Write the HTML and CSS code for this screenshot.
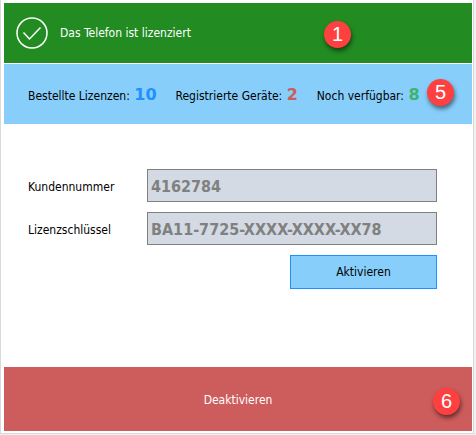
FILE: index.html
```
<!DOCTYPE html>
<html lang="de">
<head>
    <meta charset="UTF-8">
    <title>Lizenz</title>
    <link rel="stylesheet" href="styles.css">
</head>
<body>
<div class="panel">
    <header class="status">
        <svg class="status-icon" viewBox="0 0 32 32">
            <circle cx="16" cy="16" r="15"/>
            <path d="M7.500 15.500L13.500 22L24.500 10.500"/>
        </svg>
        <span>Das Telefon ist lizenziert</span>
        <span class="badge badge-status">1</span>
    </header>
    <div class="counts">
        <span>Bestellte Lizenzen: <b class="ordered">10</b></span>
        <span>Registrierte Geräte: <b class="registered">2</b></span>
        <span>Noch verfügbar: <b class="available">8</b></span>
        <span class="badge badge-counts">5</span>
    </div>
    <form class="license">
        <div class="field">
            <label for="customer">Kundennummer</label>
            <input id="customer" type="text" value="4162784" disabled>
        </div>
        <div class="field">
            <label for="key">Lizenzschlüssel</label>
            <input id="key" type="text" value="BA11-7725-XXXX-XXXX-XX78" disabled>
        </div>
        <button class="activate" type="button">Aktivieren</button>
    </form>
    <footer class="footer">
        <button class="deactivate" type="button">Deaktivieren</button>
        <span class="badge badge-footer">6</span>
    </footer>
</div>
</body>
</html>
```
FILE: styles.css
```
*{
    margin: 0;
    padding: 0;
    box-sizing: border-box;
}
body{
    display: flex;
    min-height: 100vh;
    padding: 0 2px 1px 0;
    background: #f0f0f0;
    color: #000000;
    font: 12px/16px "DejaVu Sans Condensed", "DejaVu Sans", sans-serif;
    font-stretch: condensed;
}
button,input{
    font: inherit;
}
.panel{
    flex: 1;
    display: flex;
    flex-direction: column;
    padding: 3px 1px 2px 3px;
    border: 1px solid #d9d9d9;
    border-top: 0;
    background: #ffffff;
}
.status,.counts,.footer{
    position: relative;
    display: flex;
    align-items: center;
}
.status{
    height: 60px;
    gap: 12px;
    padding: 0 12px;
    margin-bottom: 1px;
    background: #228b22;
    color: #ffffff;
}
.status-icon{
    width: 32px;
    height: 32px;
    fill: none;
    stroke: #ffffff;
    stroke-width: 1.5;
}
.counts{
    height: 60px;
    gap: 19px;
    padding: 2px 24px 0;
    background: #87cefa;
    white-space: nowrap;
}
.counts b{
    margin-left: 1px;
    font-family: "DejaVu Sans", sans-serif;
    font-size: 16px;
    font-stretch: normal;
}
.ordered{
    color: #1e90ff;
}
.registered{
    color: #cd5c5c;
}
.available{
    color: #3cb371;
}
.license{
    flex: 1;
    display: flex;
    flex-direction: column;
    gap: 10px;
    padding: 45px 35px 24px 24px;
}
.field{
    display: flex;
    align-items: center;
}
.field label{
    width: 119px;
    padding-top: 2px;
}
.field input{
    flex: 1;
    min-width: 0;
    height: 33px;
    padding: 2px 3px 0;
    border: 1px solid #808080;
    background: #d3dae3;
    color: #808080;
    font-size: 16px;
    font-weight: bold;
}
.activate{
    align-self: flex-end;
    width: 147px;
    height: 34px;
    border: 1px solid #1e90ff;
    background: #87cefa;
    color: #000000;
}
.deactivate{
    flex: 1;
    height: 64px;
    padding-top: 2px;
    border: 0;
    background: #cd5c5c;
    color: #ffffff;
}
/* numbered markers */
.badge{
    position: absolute;
    width: 27px;
    height: 27px;
    border-radius: 50%;
    background: #ff4040;
    box-shadow: 1px 3px 4px rgba(0, 0, 0, 0.5);
    color: #ffffff;
    font: 20px/27px "Liberation Sans", Arial, sans-serif;
    text-align: center;
}
.badge-status{
    top: 18px;
    right: 121px;
}
.badge-counts{
    top: 15px;
    right: 18px;
}
.badge-footer{
    top: 21px;
    right: 12px;
}
```
